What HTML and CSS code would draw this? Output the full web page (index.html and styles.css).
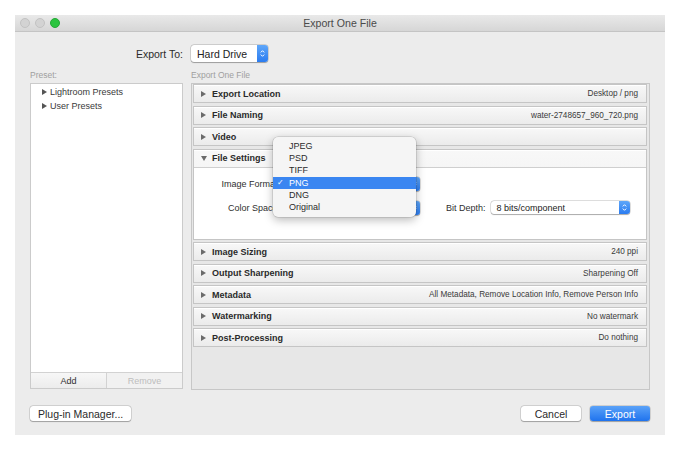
FILE: index.html
```html
<!DOCTYPE html>
<html>
<head>
<meta charset="utf-8">
<title>Export One File</title>
<link rel="stylesheet" href="styles.css">
</head>
<body>
<div class="window">
  <div class="titlebar">
    <div class="lights">
      <span class="light gray"></span>
      <span class="light gray"></span>
      <span class="light green"></span>
    </div>
    <div class="title">Export One File</div>
  </div>
  <div class="content">
    <div class="export-to">
      <div class="export-label">Export To:</div>
      <div class="popup popup-dest">
        <span class="popup-text">Hard Drive</span>
        <span class="stepper"><svg width="5" height="9" viewBox="0 0 5 9"><path d="M0.8 3.4 L2.5 1.7 L4.2 3.4 M0.8 5.6 L2.5 7.3 L4.2 5.6" fill="none" stroke="#fff" stroke-width="1"/></svg></span>
      </div>
    </div>
    <div class="columns">
      <div class="col">
        <div class="caption">Preset:</div>
        <div class="preset-box">
          <ul class="preset-list">
            <li><svg class="tri" width="5" height="6" viewBox="0 0 5 6"><path d="M0 0 L5 3 L0 6 Z" fill="#555"/></svg>Lightroom Presets</li>
            <li><svg class="tri" width="5" height="6" viewBox="0 0 5 6"><path d="M0 0 L5 3 L0 6 Z" fill="#555"/></svg>User Presets</li>
          </ul>
          <div class="preset-buttons">
            <div class="pbtn">Add</div>
            <div class="pbtn disabled">Remove</div>
          </div>
        </div>
      </div>
      <div class="col">
        <div class="caption">Export One File</div>
        <div class="panel">
          <div class="section">
            <div class="section-head"><svg class="tri" width="5" height="6" viewBox="0 0 5 6"><path d="M0 0 L5 3 L0 6 Z" fill="#6b6b6b"/></svg><span class="section-title">Export Location</span><span class="section-value">Desktop / png</span></div>
          </div>
          <div class="section">
            <div class="section-head"><svg class="tri" width="5" height="6" viewBox="0 0 5 6"><path d="M0 0 L5 3 L0 6 Z" fill="#6b6b6b"/></svg><span class="section-title">File Naming</span><span class="section-value">water-2748657_960_720.png</span></div>
          </div>
          <div class="section">
            <div class="section-head"><svg class="tri" width="5" height="6" viewBox="0 0 5 6"><path d="M0 0 L5 3 L0 6 Z" fill="#6b6b6b"/></svg><span class="section-title">Video</span><span class="section-value"></span></div>
          </div>
          <div class="section open">
            <div class="section-head"><svg class="tri" width="6" height="5" viewBox="0 0 6 5"><path d="M0 0 L6 0 L3 5 Z" fill="#6b6b6b"/></svg><span class="section-title">File Settings</span><span class="section-value"></span></div>
            <div class="section-body">
              <div class="field-row">
                <span class="field-label">Image Format:</span>
                <div class="popup popup-field anchor">
                  <span class="popup-text"></span>
                  <span class="stepper"><svg width="5" height="9" viewBox="0 0 5 9"><path d="M0.8 3.4 L2.5 1.7 L4.2 3.4 M0.8 5.6 L2.5 7.3 L4.2 5.6" fill="none" stroke="#fff" stroke-width="1"/></svg></span>
                  <div class="menu">
                    <div class="menu-item">JPEG</div>
                    <div class="menu-item">PSD</div>
                    <div class="menu-item">TIFF</div>
                    <div class="menu-item selected"><span class="check">✓</span>PNG</div>
                    <div class="menu-item">DNG</div>
                    <div class="menu-item">Original</div>
                  </div>
                </div>
              </div>
              <div class="field-row">
                <span class="field-label">Color Space:</span>
                <div class="popup popup-field">
                  <span class="popup-text"></span>
                  <span class="stepper"><svg width="5" height="9" viewBox="0 0 5 9"><path d="M0.8 3.4 L2.5 1.7 L4.2 3.4 M0.8 5.6 L2.5 7.3 L4.2 5.6" fill="none" stroke="#fff" stroke-width="1"/></svg></span>
                </div>
                <span class="field-label short">Bit Depth:</span>
                <div class="popup popup-depth">
                  <span class="popup-text">8 bits/component</span>
                  <span class="stepper"><svg width="5" height="9" viewBox="0 0 5 9"><path d="M0.8 3.4 L2.5 1.7 L4.2 3.4 M0.8 5.6 L2.5 7.3 L4.2 5.6" fill="none" stroke="#fff" stroke-width="1"/></svg></span>
                </div>
              </div>
            </div>
          </div>
          <div class="section">
            <div class="section-head"><svg class="tri" width="5" height="6" viewBox="0 0 5 6"><path d="M0 0 L5 3 L0 6 Z" fill="#6b6b6b"/></svg><span class="section-title">Image Sizing</span><span class="section-value">240 ppi</span></div>
          </div>
          <div class="section">
            <div class="section-head"><svg class="tri" width="5" height="6" viewBox="0 0 5 6"><path d="M0 0 L5 3 L0 6 Z" fill="#6b6b6b"/></svg><span class="section-title">Output Sharpening</span><span class="section-value">Sharpening Off</span></div>
          </div>
          <div class="section">
            <div class="section-head"><svg class="tri" width="5" height="6" viewBox="0 0 5 6"><path d="M0 0 L5 3 L0 6 Z" fill="#6b6b6b"/></svg><span class="section-title">Metadata</span><span class="section-value">All Metadata, Remove Location Info, Remove Person Info</span></div>
          </div>
          <div class="section">
            <div class="section-head"><svg class="tri" width="5" height="6" viewBox="0 0 5 6"><path d="M0 0 L5 3 L0 6 Z" fill="#6b6b6b"/></svg><span class="section-title">Watermarking</span><span class="section-value">No watermark</span></div>
          </div>
          <div class="section">
            <div class="section-head"><svg class="tri" width="5" height="6" viewBox="0 0 5 6"><path d="M0 0 L5 3 L0 6 Z" fill="#6b6b6b"/></svg><span class="section-title">Post-Processing</span><span class="section-value">Do nothing</span></div>
          </div>
        </div>
      </div>
    </div>
    <div class="footer">
      <div class="btn">Plug-in Manager...</div>
      <div class="footer-right">
        <div class="btn btn-fixed">Cancel</div>
        <div class="btn btn-fixed primary">Export</div>
      </div>
    </div>
  </div>
</div>
</body>
</html>
```

FILE: styles.css
```css
* { box-sizing: border-box; }

html, body {
  margin: 0;
  background: #ffffff;
}

body {
  padding: 15px;
  font-family: "Liberation Sans", Arial, sans-serif;
  color: #333;
}

.window {
  width: 650px;
  height: 420px;
  background: #ececec;
  display: flex;
  flex-direction: column;
}

/* Title bar */
.titlebar {
  height: 17px;
  position: relative;
  background: linear-gradient(#e9e9e9, #d6d6d6);
  border-bottom: 1px solid #c4c4c4;
  display: flex;
  align-items: center;
  justify-content: center;
}

.lights {
  position: absolute;
  left: 5px;
  top: 3px;
  display: flex;
  gap: 5px;
}

.light {
  width: 10px;
  height: 10px;
  border-radius: 50%;
}

.light.gray {
  background: #d3d3d3;
  border: 1px solid #c2c2c2;
}

.light.green {
  background: #2bc43f;
  border: 1px solid #24a836;
}

.title {
  font-size: 10.6px;
  color: #4a4a4a;
  line-height: 17px;
}

/* Content */
.content {
  padding: 13px 15px 0 15px;
  display: flex;
  flex-direction: column;
  flex: 1;
}

.export-to {
  display: grid;
  grid-template-columns: 153px 459px;
  column-gap: 8px;
  align-items: center;
  height: 17px;
  margin-bottom: 6px;
}

.export-label {
  text-align: right;
  font-size: 10.5px;
  color: #2b2b2b;
}

.popup {
  display: flex;
  align-items: stretch;
  background: #fff;
  border-radius: 3px;
  box-shadow: 0 0 0 0.5px rgba(0,0,0,0.22), 0 0.5px 1px rgba(0,0,0,0.25);
}

.popup-text {
  flex: 1;
  display: flex;
  align-items: center;
  white-space: nowrap;
}

.stepper {
  width: 11px;
  background: linear-gradient(#5ea6f9, #2b7cf0);
  border-radius: 0 3px 3px 0;
  display: flex;
  align-items: center;
  justify-content: center;
  flex: none;
}

.popup-dest {
  width: 77px;
  height: 17px;
  font-size: 10.5px;
  color: #222;
}

.popup-dest .popup-text {
  padding-left: 6px;
}

.columns {
  display: grid;
  grid-template-columns: 153px 459px;
  column-gap: 8px;
}

.caption {
  font-size: 8.5px;
  color: #9f9f9f;
  height: 14px;
  line-height: 14px;
  margin-bottom: 1px;
}

/* Preset box */
.preset-box {
  height: 306px;
  display: flex;
  flex-direction: column;
  border: 1px solid #cbcbcb;
  background: #fff;
}

.preset-list {
  list-style: none;
  margin: 0;
  padding: 1px 0 0 11px;
  flex: 1;
}

.preset-list li {
  height: 14px;
  display: flex;
  align-items: center;
  font-size: 9px;
  color: #3a3a3a;
}

.preset-list .tri {
  margin-right: 3px;
}

.preset-buttons {
  display: grid;
  grid-template-columns: 76px 1fr;
  height: 16px;
  border-top: 1px solid #d2d2d2;
}

.pbtn {
  font-size: 9px;
  color: #2f2f2f;
  display: flex;
  align-items: center;
  justify-content: center;
  background: linear-gradient(#f7f7f7, #ececec);
  border-right: 1px solid #d2d2d2;
}

.pbtn.disabled {
  color: #bdbdbd;
  background: #f1f1f1;
  border-right: 0;
}

/* Right panel */
.panel {
  height: 307px;
  border: 1px solid #c7c7c7;
  background: #e7e7e7;
  padding: 0 2px 0 1px;
}

.section {
  border: 1px solid #c5c5c5;
  background: linear-gradient(#f8f8f8, #ebebeb);
  box-shadow: inset 0 1px 0 #ffffff;
  margin-bottom: 2.5px;
}

.section-head {
  height: 17px;
  display: flex;
  align-items: center;
  padding: 0 8px 0 7px;
}

.section-head .tri {
  margin-right: 6px;
  flex: none;
}

.section-title {
  font-weight: bold;
  font-size: 9px;
  color: #2a2a2a;
  flex: 1;
  white-space: nowrap;
}

.section-value {
  font-size: 8.2px;
  color: #3a3a3a;
  white-space: nowrap;
}

.section.open .section-head .tri {
  margin-right: 5px;
}

.section-body {
  height: 72px;
  background: #fff;
  border-top: 1px solid #cfcfcf;
  padding-top: 9px;
}

.field-row {
  display: flex;
  align-items: center;
  height: 14px;
  margin-bottom: 10px;
}

.field-label {
  width: 86px;
  text-align: right;
  font-size: 9px;
  color: #2f2f2f;
  margin-right: 5px;
  white-space: nowrap;
}

.field-label.short {
  width: auto;
  margin-left: 26px;
}

.popup-field {
  width: 135px;
  height: 14px;
  font-size: 9px;
  color: #222;
  position: relative;
}

.popup-depth {
  width: 139px;
  height: 13px;
  font-size: 9px;
  color: #222;
}

.popup-depth .popup-text {
  padding-left: 6px;
}

/* Dropdown menu (overlay) */
.menu {
  position: absolute;
  left: -12px;
  top: -40px;
  width: 143px;
  height: 80px;
  background: #f5f5f5;
  border-radius: 5px;
  box-shadow: 0 0 0 0.5px rgba(0,0,0,0.18), 0 3px 10px rgba(0,0,0,0.28);
  padding-top: 3px;
  z-index: 5;
}

.menu-item {
  height: 12.4px;
  line-height: 12.4px;
  font-size: 9px;
  color: #2b2b2b;
  padding-left: 16px;
  position: relative;
}

.menu-item.selected {
  background: #3a86f1;
  color: #fff;
}

.check {
  position: absolute;
  left: 4px;
  top: 0;
  font-family: "DejaVu Sans", sans-serif;
  font-size: 8px;
}

/* Footer */
.footer {
  margin-top: 16px;
  display: flex;
  justify-content: space-between;
  align-items: center;
}

.footer-right {
  display: flex;
  gap: 9px;
}

.btn {
  height: 15px;
  padding: 0 8px;
  font-size: 10.5px;
  color: #2a2a2a;
  background: #fff;
  border-radius: 3px;
  box-shadow: 0 0 0 0.5px rgba(0,0,0,0.2), 0 0.5px 1px rgba(0,0,0,0.25);
  display: flex;
  align-items: center;
  justify-content: center;
  white-space: nowrap;
}

.btn-fixed {
  width: 60px;
  padding: 0;
}

.btn.primary {
  background: linear-gradient(#5aa2f8, #1f73ee);
  color: #fff;
}
```
